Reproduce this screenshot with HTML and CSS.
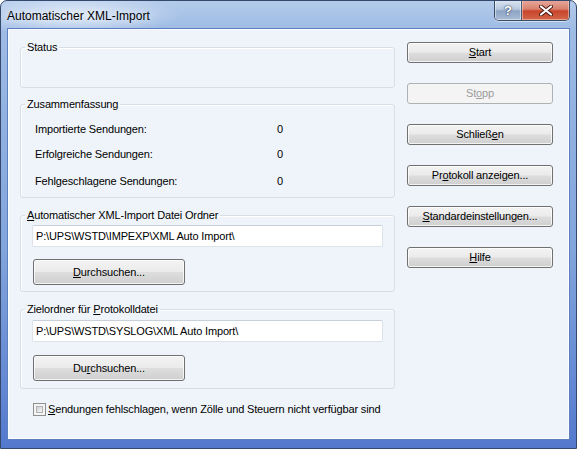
FILE: index.html
```html
<!DOCTYPE html>
<html lang="de">
<head>
<meta charset="utf-8">
<title>Automatischer XML-Import</title>
<link rel="stylesheet" href="styles.css">
</head>
<body>
<div class="window">
  <div class="titlebar">
    <div class="title">Automatischer XML-Import</div>
    <div class="caption-buttons">
      <div class="cap-btn help">?</div>
      <div class="cap-btn close">
        <svg width="14" height="11" viewBox="0 0 14 11" aria-hidden="true">
          <path d="M2 1.5 L12 9.5 M12 1.5 L2 9.5" stroke="#4a1a14" stroke-width="4" stroke-linecap="round"/>
          <path d="M2 1.5 L12 9.5 M12 1.5 L2 9.5" stroke="#ffffff" stroke-width="2.2" stroke-linecap="round"/>
        </svg>
      </div>
    </div>
  </div>
  <div class="client">
    <div class="left-col">
      <fieldset class="group group-status">
        <legend>Status</legend>
        <div class="status-body"></div>
      </fieldset>

      <fieldset class="group group-summary">
        <legend>Zusammenfassung</legend>
        <div class="summary-body">
          <div class="row row1"><span class="row-label">Importierte Sendungen:</span><span class="row-value">0</span></div>
          <div class="row row2"><span class="row-label">Erfolgreiche Sendungen:</span><span class="row-value">0</span></div>
          <div class="row row3"><span class="row-label">Fehlgeschlagene Sendungen:</span><span class="row-value">0</span></div>
        </div>
      </fieldset>

      <fieldset class="group group-folder">
        <legend><u>A</u>utomatischer XML-Import Datei Ordner</legend>
        <div class="folder-body">
          <div class="textbox">P:\UPS\WSTD\IMPEXP\XML Auto Import\</div>
          <div class="btn browse"><u>D</u>urchsuchen...</div>
        </div>
      </fieldset>

      <fieldset class="group group-log">
        <legend>Zielordner für <u>P</u>rotokolldatei</legend>
        <div class="folder-body log-body">
          <div class="textbox">P:\UPS\WSTD\SYSLOG\XML Auto Import\</div>
          <div class="btn browse">Du<u>r</u>chsuchen...</div>
        </div>
      </fieldset>

      <div class="check-row">
        <span class="checkbox"><span class="checkbox-inner"></span></span>
        <span class="check-label"><u>S</u>endungen fehlschlagen, wenn Zölle und Steuern nicht verfügbar sind</span>
      </div>
    </div>

    <div class="right-col">
      <div class="btn side"><u>S</u>tart</div>
      <div class="btn side disabled">St<u>o</u>pp</div>
      <div class="btn side">Schließ<u>e</u>n</div>
      <div class="btn side">Pr<u>o</u>tokoll anzeigen...</div>
      <div class="btn side"><u>S</u>tandardeinstellungen...</div>
      <div class="btn side"><u>H</u>ilfe</div>
    </div>
  </div>
</div>
</body>
</html>
```

FILE: styles.css
```css
* { box-sizing: border-box; }

html, body {
  margin: 0;
  padding: 0;
  background: #ffffff;
}

body {
  font-family: "Liberation Sans", Arial, sans-serif;
  font-size: 11px;
  letter-spacing: -0.15px;
  color: #000;
}

u { text-decoration: underline; text-underline-offset: 1px; }

.window {
  width: 577px;
  height: 449px;
  border: 1px solid #34496b;
  border-radius: 7px 7px 0 0;
  background:
    radial-gradient(ellipse 110px 22px at 70px 14px, rgba(235, 242, 252, 0.85), rgba(235, 242, 252, 0) 100%),
    linear-gradient(180deg, #b4cbea 0%, #9fbce4 6%, #92b2e1 25%, #82a5dc 55%, #6589d3 85%, #5379cd 100%);
  display: flex;
  flex-direction: column;
  overflow: hidden;
}

.titlebar {
  height: 28px;
  display: flex;
  justify-content: space-between;
  align-items: flex-start;
  flex: none;
}

.title {
  font-family: "Liberation Sans", Arial, sans-serif;
  font-size: 12px;
  letter-spacing: 0;
  line-height: 14px;
  margin: 8px 0 0 6px;
  color: #000;
  text-shadow: 0 0 6px rgba(255, 255, 255, 0.9);
}

.caption-buttons {
  display: flex;
  margin-right: 6px;
  margin-top: -1px;
  border: 1px solid #3b4c66;
  border-top: none;
  border-radius: 0 0 5px 5px;
  overflow: hidden;
  box-shadow: 0 1px 0 rgba(255, 255, 255, 0.5);
}

.cap-btn {
  height: 20px;
  display: flex;
  align-items: center;
  justify-content: center;
}

.help {
  width: 27px;
  background: linear-gradient(180deg, #dde6f2 0%, #b9c9df 45%, #8fa4c4 55%, #a9bcd6 100%);
  color: #fff;
  font-weight: bold;
  font-size: 13px;
  text-shadow: 0 0 2px #2b3c5a, 0 0 1px #2b3c5a;
  border-right: 1px solid #4b5b74;
  box-shadow: inset 0 0 0 1px rgba(255, 255, 255, 0.45);
}

.close {
  width: 47px;
  background: linear-gradient(180deg, #e8aaa0 0%, #d9826f 45%, #c8442c 55%, #d2684a 100%);
  box-shadow: inset 0 0 0 1px rgba(255, 220, 210, 0.5);
}

.client {
  flex: 1;
  margin: 0 7px 9px 7px;
  background: #eff4fa;
  border: 1px solid #fbfdff;
  box-shadow: 0 0 0 1px #5d7fbf;
  display: flex;
  align-items: flex-start;
  padding: 11px 0 0 11px;
}

.left-col {
  width: 375px;
  display: flex;
  flex-direction: column;
}

.group {
  margin: 0;
  padding: 0;
  border: 1px solid #d5dfe5;
  border-radius: 3px;
  box-shadow: inset 1px 1px 0 #ffffff;
  min-width: 0;
}

.group legend {
  margin-left: 4px;
  padding: 0 2px;
  line-height: 13px;
  font-size: 11px;
}

.status-body { height: 33px; }

.group-summary { margin-top: 10px; }

.summary-body {
  padding: 12px 0 9px 14px;
}

.row {
  display: flex;
  line-height: 13px;
  height: 13px;
}

.row2 { margin-top: 12px; }
.row3 { margin-top: 14px; }

.row-label { width: 242px; }

.row-value { width: 20px; }

.group-folder { margin-top: 11px; }
.group-log { margin-top: 11px; }

.folder-body {
  padding: 3px 11px 6px 11px;
}

.log-body {
  padding-top: 4px;
  padding-bottom: 7px;
}

.textbox {
  height: 22px;
  width: 351px;
  background: #fff;
  border: 1px solid #dde3ea;
  border-top-color: #c9d0d9;
  border-radius: 2px;
  padding: 0 3px;
  line-height: 20px;
  white-space: nowrap;
}

.btn {
  display: flex;
  align-items: center;
  justify-content: center;
  border: 1px solid #707070;
  border-radius: 3px;
  background: linear-gradient(180deg, #f3f3f3 0%, #ebebeb 48%, #dddddd 52%, #cfcfcf 100%);
  box-shadow: inset 0 0 0 1px rgba(255, 255, 255, 0.75);
  line-height: 13px;
  white-space: nowrap;
}

.browse {
  width: 152px;
  height: 26px;
  margin-top: 12px;
  margin-left: 1px;
}

.log-body .browse { margin-top: 13px; }

.check-row {
  display: flex;
  align-items: center;
  margin-top: 14px;
  margin-left: 13px;
  height: 13px;
}

.checkbox {
  width: 13px;
  height: 13px;
  border: 1px solid #8e8f8f;
  background: #f4f4f4;
  padding: 2px;
  display: block;
  flex: none;
}

.checkbox-inner {
  display: block;
  width: 7px;
  height: 7px;
  border: 1px solid #b3b3b3;
  background: linear-gradient(135deg, #cbcfd5 0%, #e6e8eb 60%, #f6f6f6 100%);
}

.check-label {
  margin-left: 2px;
  line-height: 13px;
}

.right-col {
  width: 146px;
  margin-left: 12px;
  display: flex;
  flex-direction: column;
  gap: 20px;
  padding-top: 1px;
}

.side {
  height: 21px;
}

.disabled {
  color: #9c9c9c;
  border-color: #adb2b5;
  background: #f4f4f4;
  box-shadow: none;
}
```
